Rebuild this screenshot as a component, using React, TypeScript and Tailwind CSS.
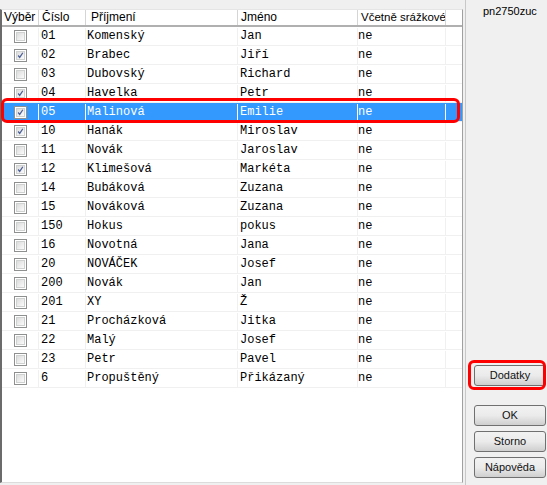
import React from 'react';

type Row = { checked: boolean; cislo: string; prijmeni: string; jmeno: string; vcetne: string };

const rows: Row[] = [
  { checked: false, cislo: '01', prijmeni: 'Komenský', jmeno: 'Jan', vcetne: 'ne' },
  { checked: true, cislo: '02', prijmeni: 'Brabec', jmeno: 'Jiří', vcetne: 'ne' },
  { checked: false, cislo: '03', prijmeni: 'Dubovský', jmeno: 'Richard', vcetne: 'ne' },
  { checked: true, cislo: '04', prijmeni: 'Havelka', jmeno: 'Petr', vcetne: 'ne' },
  { checked: true, cislo: '05', prijmeni: 'Malinová', jmeno: 'Emilie', vcetne: 'ne' },
  { checked: true, cislo: '10', prijmeni: 'Hanák', jmeno: 'Miroslav', vcetne: 'ne' },
  { checked: false, cislo: '11', prijmeni: 'Novák', jmeno: 'Jaroslav', vcetne: 'ne' },
  { checked: true, cislo: '12', prijmeni: 'Klimešová', jmeno: 'Markéta', vcetne: 'ne' },
  { checked: false, cislo: '14', prijmeni: 'Bubáková', jmeno: 'Zuzana', vcetne: 'ne' },
  { checked: false, cislo: '15', prijmeni: 'Nováková', jmeno: 'Zuzana', vcetne: 'ne' },
  { checked: false, cislo: '150', prijmeni: 'Hokus', jmeno: 'pokus', vcetne: 'ne' },
  { checked: false, cislo: '16', prijmeni: 'Novotná', jmeno: 'Jana', vcetne: 'ne' },
  { checked: false, cislo: '20', prijmeni: 'NOVÁČEK', jmeno: 'Josef', vcetne: 'ne' },
  { checked: false, cislo: '200', prijmeni: 'Novák', jmeno: 'Jan', vcetne: 'ne' },
  { checked: false, cislo: '201', prijmeni: 'XY', jmeno: 'Ž', vcetne: 'ne' },
  { checked: false, cislo: '21', prijmeni: 'Procházková', jmeno: 'Jitka', vcetne: 'ne' },
  { checked: false, cislo: '22', prijmeni: 'Malý', jmeno: 'Josef', vcetne: 'ne' },
  { checked: false, cislo: '23', prijmeni: 'Petr', jmeno: 'Pavel', vcetne: 'ne' },
  { checked: false, cislo: '6', prijmeni: 'Propuštěný', jmeno: 'Přikázaný', vcetne: 'ne' },
];

const SELECTED = 4;

function CheckBox({ checked }: { checked: boolean }) {
  return (
    <div className="w-[13px] h-[13px] border border-[#8e8f8f] bg-white p-[1px]">
      <div className="w-full h-full border border-[#cfd0d0] bg-gradient-to-br from-[#dcdcdc] to-[#fbfbfb] flex items-center justify-center">
        {checked && (
          <svg width="9" height="9" viewBox="0 0 9 9">
            <path d="M1.5 4.5 L3.5 7 L7.5 1" fill="none" stroke="#4a5f97" strokeWidth="1.6" />
          </svg>
        )}
      </div>
    </div>
  );
}

function Button({ label }: { label: string }) {
  return (
    <div className="w-[72px] h-[21px] rounded-[3px] border border-[#707070] bg-gradient-to-b from-[#f2f2f2] via-[#ebebeb] to-[#cfcfcf] flex items-center justify-center text-[11px] font-normal text-[#111]">
      {label}
    </div>
  );
}

const cols = ['w-[37px]', 'w-[47px]', 'w-[152px]', 'w-[120px]', 'w-[88px]', 'w-[16px]'];

export default function App() {
  return (
    <div className="relative w-[547px] h-[485px] bg-[#f0f0f0] flex overflow-hidden" style={{ fontFamily: '"Liberation Sans", Arial, sans-serif' }}>
      <div className="pt-[9px] w-[463px] shrink-0">
        <div className="h-[474px] bg-white border-l-2 border-l-[#6b6b6b] border-r border-r-[#a0a0a0] border-t border-t-[#e5e5e5] border-b border-b-[#dcdcdc]">
          <div className="flex h-[17px] border-b-2 border-[#b0b0b0] text-[12px] leading-[15px] text-black whitespace-nowrap">
            <div className={`${cols[0]} pl-[2px] border-r border-[#d5d5d5] overflow-hidden`}>Výběr</div>
            <div className={`${cols[1]} pl-[3px] border-r border-[#d5d5d5] overflow-hidden`}>Číslo</div>
            <div className={`${cols[2]} pl-[5px] border-r border-[#d5d5d5] overflow-hidden`}>Příjmení</div>
            <div className={`${cols[3]} pl-[3px] border-r border-[#d5d5d5] overflow-hidden`}>Jméno</div>
            <div className={`${cols[4]} pl-[3px] border-r border-[#d5d5d5] overflow-hidden text-[11.5px]`}>Včetně srážkové</div>
            <div className={`${cols[5]}`} />
          </div>
          {rows.map((r, i) => {
            const sel = i === SELECTED;
            const line = sel ? 'border-white' : 'border-[#f0f0f0]';
            return (
              <div
                key={r.cislo + r.prijmeni}
                className={`flex h-[19px] pt-[1px] border-b border-[#f0f0f0] text-[12px] leading-[17px] whitespace-nowrap ${sel ? 'bg-[#3399ff] text-white' : 'text-black'}`}
                style={{ fontFamily: '"Liberation Mono", "Courier New", monospace' }}
              >
                <div className={`${cols[0]} border-r ${line} flex items-center justify-center`}>
                  <CheckBox checked={r.checked} />
                </div>
                <div className={`${cols[1]} pl-[2px] border-r ${line}`}>{r.cislo}</div>
                <div className={`${cols[2]} pl-[1px] border-r ${line}`}>{r.prijmeni}</div>
                <div className={`${cols[3]} pl-[2px] border-r ${line}`}>{r.jmeno}</div>
                <div className={`${cols[4]} pl-[0px] border-r ${line}`}>{r.vcetne}</div>
                <div className={`${cols[5]}`} />
              </div>
            );
          })}
        </div>
      </div>
      <div className="w-[1px] ml-[2px] bg-[#c8c8c8] shrink-0" />
      <div className="flex-1 flex flex-col items-end pr-[1px]">
        <div className="self-start pl-[17px] pt-[5px] text-[11px] text-black leading-[13px]">pn2750zuc</div>
        <div className="mt-[347px]">
          <Button label="Dodatky" />
        </div>
        <div className="mt-[19px] flex flex-col gap-[5px]">
          <Button label="OK" />
          <Button label="Storno" />
          <Button label="Nápověda" />
        </div>
      </div>
      <div className="absolute left-[1px] top-[98px] w-[459px] h-[25px] border-[3px] border-[#ff0000] rounded-[6px]" />
      <div className="absolute left-[468px] top-[360px] w-[78px] h-[30px] border-[3px] border-[#ff0000] rounded-[6px]" />
    </div>
  );
}
